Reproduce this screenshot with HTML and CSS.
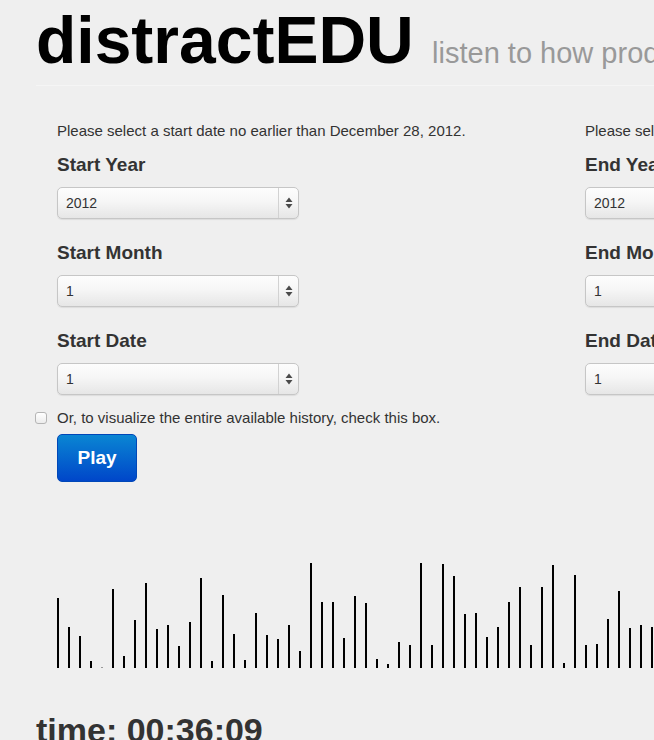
FILE: index.html
```html
<!DOCTYPE html>
<html lang="en">
<head>
<meta charset="utf-8">
<title>distractEDU</title>
<link rel="stylesheet" href="styles.css">
</head>
<body>
<div class="page">
  <header class="page-header">
    <h1 class="title">distractEDU <small class="tagline">listen to how productive the class has been</small></h1>
  </header>

  <form class="form">
    <div class="columns">
      <div class="col">
        <p class="notice">Please select a start date no earlier than December 28, 2012.</p>
        <div class="field">
          <label class="field-label">Start Year</label>
          <div class="select"><span class="select-value">2012</span><span class="select-arrows"><svg width="8" height="14" viewBox="0 0 8 14"><path d="M4 1.5 L7.5 6 L0.5 6 Z M4 12.5 L7.5 8 L0.5 8 Z" fill="#4a4a4a"/></svg></span></div>
        </div>
        <div class="field">
          <label class="field-label">Start Month</label>
          <div class="select"><span class="select-value">1</span><span class="select-arrows"><svg width="8" height="14" viewBox="0 0 8 14"><path d="M4 1.5 L7.5 6 L0.5 6 Z M4 12.5 L7.5 8 L0.5 8 Z" fill="#4a4a4a"/></svg></span></div>
        </div>
        <div class="field">
          <label class="field-label">Start Date</label>
          <div class="select"><span class="select-value">1</span><span class="select-arrows"><svg width="8" height="14" viewBox="0 0 8 14"><path d="M4 1.5 L7.5 6 L0.5 6 Z M4 12.5 L7.5 8 L0.5 8 Z" fill="#4a4a4a"/></svg></span></div>
        </div>
      </div>
      <div class="col">
        <p class="notice">Please select an end date no later than today.</p>
        <div class="field">
          <label class="field-label">End Year</label>
          <div class="select"><span class="select-value">2012</span><span class="select-arrows"><svg width="8" height="14" viewBox="0 0 8 14"><path d="M4 1.5 L7.5 6 L0.5 6 Z M4 12.5 L7.5 8 L0.5 8 Z" fill="#4a4a4a"/></svg></span></div>
        </div>
        <div class="field">
          <label class="field-label">End Month</label>
          <div class="select"><span class="select-value">1</span><span class="select-arrows"><svg width="8" height="14" viewBox="0 0 8 14"><path d="M4 1.5 L7.5 6 L0.5 6 Z M4 12.5 L7.5 8 L0.5 8 Z" fill="#4a4a4a"/></svg></span></div>
        </div>
        <div class="field">
          <label class="field-label">End Date</label>
          <div class="select"><span class="select-value">1</span><span class="select-arrows"><svg width="8" height="14" viewBox="0 0 8 14"><path d="M4 1.5 L7.5 6 L0.5 6 Z M4 12.5 L7.5 8 L0.5 8 Z" fill="#4a4a4a"/></svg></span></div>
        </div>
      </div>
    </div>

    <label class="check"><input type="checkbox" class="check-box">Or, to visualize the entire available history, check this box.</label>

    <button type="button" class="btn-play">Play</button>

    <div class="chart">
      <span class="bar" style="height:70px"></span>
      <span class="bar" style="height:41px"></span>
      <span class="bar" style="height:32px"></span>
      <span class="bar" style="height:7px"></span>
      <span class="bar bar-faint" style="height:1px"></span>
      <span class="bar" style="height:79px"></span>
      <span class="bar" style="height:12px"></span>
      <span class="bar" style="height:48px"></span>
      <span class="bar" style="height:85px"></span>
      <span class="bar" style="height:39px"></span>
      <span class="bar" style="height:43px"></span>
      <span class="bar" style="height:22px"></span>
      <span class="bar" style="height:46px"></span>
      <span class="bar" style="height:90px"></span>
      <span class="bar" style="height:7px"></span>
      <span class="bar" style="height:73px"></span>
      <span class="bar" style="height:34px"></span>
      <span class="bar" style="height:8px"></span>
      <span class="bar" style="height:55px"></span>
      <span class="bar" style="height:33px"></span>
      <span class="bar" style="height:29px"></span>
      <span class="bar" style="height:43px"></span>
      <span class="bar" style="height:17px"></span>
      <span class="bar" style="height:105px"></span>
      <span class="bar" style="height:66px"></span>
      <span class="bar" style="height:66px"></span>
      <span class="bar" style="height:30px"></span>
      <span class="bar" style="height:72px"></span>
      <span class="bar" style="height:65px"></span>
      <span class="bar" style="height:9px"></span>
      <span class="bar" style="height:4px"></span>
      <span class="bar" style="height:26px"></span>
      <span class="bar" style="height:23px"></span>
      <span class="bar" style="height:105px"></span>
      <span class="bar" style="height:23px"></span>
      <span class="bar" style="height:104px"></span>
      <span class="bar" style="height:92px"></span>
      <span class="bar" style="height:54px"></span>
      <span class="bar" style="height:55px"></span>
      <span class="bar" style="height:31px"></span>
      <span class="bar" style="height:41px"></span>
      <span class="bar" style="height:66px"></span>
      <span class="bar" style="height:81px"></span>
      <span class="bar" style="height:23px"></span>
      <span class="bar" style="height:81px"></span>
      <span class="bar" style="height:103px"></span>
      <span class="bar" style="height:5px"></span>
      <span class="bar" style="height:93px"></span>
      <span class="bar" style="height:23px"></span>
      <span class="bar" style="height:24px"></span>
      <span class="bar" style="height:49px"></span>
      <span class="bar" style="height:77px"></span>
      <span class="bar" style="height:40px"></span>
      <span class="bar" style="height:43px"></span>
      <span class="bar" style="height:41px"></span>
    </div>
  </form>

  <h2 class="time">time: 00:36:09</h2>
</div>
</body>
</html>
```

FILE: styles.css
```css
html {
  overflow: hidden;
}

body {
  margin: 0;
  background: #efefef;
  font-family: "Liberation Sans", Arial, sans-serif;
  color: #333333;
}

.page {
  width: 1200px;
  padding-left: 36px;
}

.page-header {
  padding-top: 7px;
  padding-bottom: 12px;
  border-bottom: 1px solid #f5f5f5;
}

.title {
  margin: 0;
  font-size: 66px;
  line-height: 66px;
  font-weight: bold;
  color: #000000;
  white-space: nowrap;
}

.tagline {
  font-size: 29px;
  line-height: 0;
  font-weight: normal;
  color: #999999;
}

.form {
  margin: 35px 0 0 0;
  padding-left: 21px;
}

.columns {
  display: flex;
  gap: 20px;
}

.col {
  width: 508px;
  flex: none;
}

.notice {
  margin: 0 0 12px 0;
  font-size: 15px;
  line-height: 20px;
  color: #333333;
  white-space: nowrap;
}

.field {
  margin-bottom: 22px;
}

.field:last-child {
  margin-bottom: 0;
}

.field-label {
  display: block;
  font-size: 19px;
  line-height: 24px;
  font-weight: bold;
  color: #333333;
  margin-bottom: 10px;
}

.select {
  box-sizing: border-box;
  display: flex;
  align-items: stretch;
  width: 242px;
  height: 32px;
  border: 1px solid #c6c6c6;
  border-radius: 5px;
  background: linear-gradient(#fdfdfd 0%, #f6f6f6 45%, #e6e6e6 100%);
  box-shadow: 0 1px 1px rgba(0, 0, 0, 0.08);
}

.select-value {
  flex: 1;
  display: flex;
  align-items: center;
  padding-left: 8px;
  font-size: 14px;
  color: #333333;
}

.select-arrows {
  width: 19px;
  display: flex;
  align-items: center;
  justify-content: center;
  border-left: 1px solid #d2d2d2;
}

.check {
  display: flex;
  align-items: center;
  margin-top: 13px;
  font-size: 15px;
  line-height: 20px;
  color: #333333;
}

.check-box {
  -webkit-appearance: none;
  appearance: none;
  box-sizing: border-box;
  width: 12px;
  height: 12px;
  margin: 0 10px 0 -22px;
  border: 1px solid #b5b5b5;
  border-radius: 3px;
  background: linear-gradient(#ffffff, #ececec);
}

.btn-play {
  display: block;
  box-sizing: border-box;
  width: 80px;
  height: 48px;
  margin-top: 6px;
  padding: 0;
  border: 1px solid #0047b8;
  border-radius: 5px;
  background: linear-gradient(#0a86d3, #0046c9);
  color: #ffffff;
  font-family: "Liberation Sans", Arial, sans-serif;
  font-size: 19px;
  font-weight: bold;
}

.chart {
  display: flex;
  align-items: flex-end;
  gap: 9px;
  height: 110px;
  margin-top: 76px;
}

.bar {
  flex: none;
  width: 2px;
  background: #000000;
}

.bar-faint {
  background: #999999;
}

.time {
  margin: 42px 0 0 0;
  font-size: 34px;
  line-height: 40px;
  font-weight: bold;
  color: #333333;
}
```
